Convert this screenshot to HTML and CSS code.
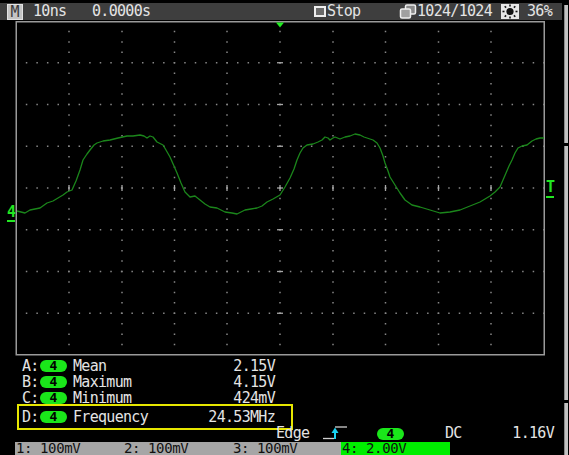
FILE: index.html
```html
<!DOCTYPE html>
<html>
<head>
<meta charset="utf-8">
<link rel="stylesheet" href="styles.css">
</head>
<body>
<div class="app">
  <div class="main">
    <div class="topbar">
      <span class="mbox">M</span>
      <span class="tb t1">10ns</span>
      <span class="tb t2">0.0000s</span>
      <span class="stopicon"></span>
      <span class="tb stoptxt">Stop</span>
      <svg class="acqicon" width="18" height="15" viewBox="0 0 18 15"><rect x="6.5" y="1" width="10" height="9" rx="1.5" fill="#8a8a8a" stroke="#eeeeee" stroke-width="1.5"/><rect x="1.5" y="5" width="10" height="9" rx="1.5" fill="#a0a0a0" stroke="#eeeeee" stroke-width="1.5"/></svg>
      <span class="tb acqtxt">1024/1024</span>
      <svg class="sunicon" width="18" height="15" viewBox="0 0 18 15"><rect width="18" height="15" fill="#e6e6e6"/><circle cx="9" cy="7.5" r="3.6" fill="#111"/><g stroke="#111" stroke-width="1.6"><line x1="9" y1="0.5" x2="9" y2="2.5"/><line x1="9" y1="12.5" x2="9" y2="14.5"/><line x1="1.5" y1="7.5" x2="3.5" y2="7.5"/><line x1="14.5" y1="7.5" x2="16.5" y2="7.5"/><line x1="3.7" y1="2.2" x2="5.1" y2="3.6"/><line x1="12.9" y1="11.4" x2="14.3" y2="12.8"/><line x1="14.3" y1="2.2" x2="12.9" y2="3.6"/><line x1="5.1" y1="11.4" x2="3.7" y2="12.8"/></g></svg>
      <span class="tb pcttxt">36%</span>
    </div>

    <svg class="scope" width="562" height="338" viewBox="0 20 562 338">
      <g class="grid" stroke="#868686" stroke-width="1.5" stroke-dasharray="1.5 8.9375" stroke-dashoffset="0.75">
        <line x1="69" y1="21" x2="69" y2="355"/>
        <line x1="122" y1="21" x2="122" y2="355"/>
        <line x1="174.5" y1="21" x2="174.5" y2="355"/>
        <line x1="227" y1="21" x2="227" y2="355"/>
        <line x1="280" y1="21" x2="280" y2="355"/>
        <line x1="333" y1="21" x2="333" y2="355"/>
        <line x1="385.5" y1="21" x2="385.5" y2="355"/>
        <line x1="438.5" y1="21" x2="438.5" y2="355"/>
        <line x1="491" y1="21" x2="491" y2="355"/>
      </g>
      <g class="grid" stroke="#868686" stroke-width="1.5" stroke-dasharray="1.5 9.06" stroke-dashoffset="0.75">
        <line x1="16" y1="62.75" x2="544" y2="62.75"/>
        <line x1="16" y1="104.5" x2="544" y2="104.5"/>
        <line x1="16" y1="146.25" x2="544" y2="146.25"/>
        <line x1="16" y1="188" x2="544" y2="188"/>
        <line x1="16" y1="229.75" x2="544" y2="229.75"/>
        <line x1="16" y1="271.5" x2="544" y2="271.5"/>
        <line x1="16" y1="313.25" x2="544" y2="313.25"/>
      </g>
      <g stroke="#a8a8a8" stroke-width="1.3">
        <line x1="69" y1="185" x2="69" y2="191"/>
        <line x1="122" y1="185" x2="122" y2="191"/>
        <line x1="174.5" y1="185" x2="174.5" y2="191"/>
        <line x1="227" y1="185" x2="227" y2="191"/>
        <line x1="280" y1="185" x2="280" y2="191"/>
        <line x1="333" y1="185" x2="333" y2="191"/>
        <line x1="385.5" y1="185" x2="385.5" y2="191"/>
        <line x1="438.5" y1="185" x2="438.5" y2="191"/>
        <line x1="491" y1="185" x2="491" y2="191"/>
        <line x1="277" y1="62.75" x2="283" y2="62.75"/>
        <line x1="277" y1="104.5" x2="283" y2="104.5"/>
        <line x1="277" y1="146.25" x2="283" y2="146.25"/>
        <line x1="277" y1="188" x2="283" y2="188"/>
        <line x1="277" y1="229.75" x2="283" y2="229.75"/>
        <line x1="277" y1="271.5" x2="283" y2="271.5"/>
        <line x1="277" y1="313.25" x2="283" y2="313.25"/>
      </g>
      <rect x="16.25" y="21.75" width="528" height="333" fill="none" stroke="#9a9a9a" stroke-width="1.5"/>
      <polygon points="276,22.5 284,22.5 280,27.5" fill="#22ee22"/>
      <path class="wave" fill="none" stroke="#1b861b" stroke-width="1.3" stroke-linejoin="round"
        d="M17,211 L21,212 L25,213 L30,210 L35,209 L40,208 L47,203 L53,201 L58,198 L63,195 L67,192 L72,190 L76,181 L80,170 L83,160 L87,154 L90,150 L94,145 L97,143 L103,141 L110,140 L118,138 L127,136 L133,136 L140,135 L144,136 L147,138 L150,136 L153,137 L157,142 L163,145 L166,150 L170,157 L174,166 L177,173 L181,183 L185,192 L190,197 L195,196 L200,200 L205,204 L210,207 L217,208 L225,212 L232,213 L237,214 L241,212 L245,210 L251,209 L257,208 L262,206 L267,202 L273,199 L280,195 L285,187 L290,178 L294,169 L297,160 L300,153 L303,148 L307,145 L313,144 L318,142 L322,140 L325,137 L328,138 L330,140 L333,138 L335,137 L340,139 L345,137 L350,136 L355,134 L360,135 L364,137 L367,138 L373,140 L377,143 L380,148 L383,156 L385,163 L388,171 L390,177 L395,185 L400,193 L405,200 L412,205 L420,207 L430,210 L440,213 L450,212 L460,210 L470,206 L480,202 L485,199 L490,196 L495,192 L500,187 L503,180 L506,173 L509,166 L512,160 L515,153 L518,148 L522,146 L527,145 L532,141 L536,139 L540,138 L544,138"/>
      <text x="7" y="217" class="mark">4</text>
      <rect x="7" y="220" width="8" height="2" fill="#22e622"/>
      <text x="546" y="192" class="mark">T</text>
      <rect x="546" y="196" width="8" height="2" fill="#22e622"/>
    </svg>

    <div class="meas">
      <div class="row"><span class="lbl">A:</span><span class="pill">4</span><span class="name">Mean</span><span class="val">2.15V</span></div>
      <div class="row"><span class="lbl">B:</span><span class="pill">4</span><span class="name">Maximum</span><span class="val">4.15V</span></div>
      <div class="row rowc"><span class="lbl">C:</span><span class="pill">4</span><span class="name">Minimum</span><span class="val">424mV</span></div>
      <div class="row sel"><span class="lbl">D:</span><span class="pill">4</span><span class="name">Frequency</span><span class="val">24.53MHz</span></div>
    </div>

    <div class="trig">
      <span class="edge">Edge</span>
      <svg class="edgeicon" width="26" height="14" viewBox="0 0 26 14"><path d="M1 12.5 H12" stroke="#cfcfcf" stroke-width="1.3" fill="none"/><path d="M13 1 H25" stroke="#cfcfcf" stroke-width="1.3" fill="none"/><path d="M13 13 V5" stroke="#19d2f0" stroke-width="2" fill="none"/><polygon points="9.5,7 16.5,7 13,1.5" fill="#19d2f0"/></svg>
      <span class="pill tpill">4</span>
      <span class="dc">DC</span>
      <span class="lvl">1.16V</span>
    </div>

    <div class="chans">
      <span class="ch grey">1: 100mV</span>
      <span class="ch grey">2: 100mV</span>
      <span class="ch grey">3: 100mV</span>
      <span class="ch green">4: 2.00V</span>
    </div>
  </div>
  <div class="scroll">
    <div class="seg s1"></div>
    <div class="seg s2"></div>
    <div class="seg s3"></div>
  </div>
</div>
</body>
</html>
```

FILE: styles.css
```css
html, body {
  margin: 0;
  padding: 0;
  background: #000;
}

.app {
  display: flex;
  width: 569px;
  height: 455px;
  overflow: hidden;
  background: #000;
  font-family: "DejaVu Sans Mono", "Liberation Mono", monospace;
  font-size: 15px;
  line-height: 15px;
  letter-spacing: -0.7px;
  color: #e4e4e4;
}

.main {
  width: 562px;
  display: flex;
  flex-direction: column;
}

/* top status bar */
.topbar {
  margin-top: 3px;
  height: 17px;
  background: #3e3e3e;
  display: flex;
  align-items: center;
  white-space: nowrap;
}

.mbox {
  margin-left: 7px;
  width: 16px;
  height: 16px;
  box-sizing: border-box;
  background: #c4c4c4;
  border: 1px solid #e2e2e2;
  color: #3a3a3a;
  font-size: 15px;
  line-height: 14px;
  text-align: center;
  letter-spacing: 0;
}

.tb {
  line-height: 17px;
}

.t1 {
  margin-left: 10px;
  width: 59px;
}

.t2 {
  width: 222px;
}

.stopicon {
  width: 12px;
  height: 11px;
  box-sizing: border-box;
  border: 2px solid #eeeeee;
  background: #6a6a6a;
  margin-right: 1px;
}

.stoptxt {
  width: 72px;
}

.acqicon {
  flex: none;
}

.acqtxt {
  width: 84px;
}

.sunicon {
  flex: none;
  margin-right: 8px;
}

/* oscilloscope screen */
.scope {
  display: block;
  flex: none;
}

.mark {
  font-family: "DejaVu Sans Mono", monospace;
  font-size: 15px;
  font-weight: bold;
  fill: #22e622;
}

/* measurement list */
.meas {
  display: flex;
  flex-direction: column;
}

.row {
  display: flex;
  align-items: center;
  height: 16px;
  line-height: 14px;
  width: 275px;
  box-sizing: border-box;
  padding-left: 22px;
  white-space: nowrap;
}

.lbl {
  width: 18px;
}

.pill {
  width: 27px;
  height: 12px;
  border-radius: 6px;
  background: #1ae61a;
  color: #000;
  font-size: 13px;
  font-weight: bold;
  line-height: 12px;
  text-align: center;
  letter-spacing: 0;
  margin-right: 6px;
  flex: none;
}

.val {
  margin-left: auto;
}

.sel {
  position: relative;
  margin-top: -2px;
  margin-left: 17px;
  width: 276px;
  height: 26px;
  padding-left: 3px;
  padding-right: 16px;
  border: 2px solid #e6e600;
}

/* trigger line */
.trig {
  position: relative;
  margin-top: -4px;
  height: 15px;
  line-height: 13px;
  display: flex;
  align-items: center;
  padding-left: 276px;
  padding-right: 8px;
  white-space: nowrap;
}

.edge {
  width: 33px;
}

.edgeicon {
  flex: none;
  margin-left: 13px;
  margin-top: -2px;
}

.tpill {
  margin-left: 29px;
  margin-right: 0;
}

.dc {
  margin-left: 41px;
}

.lvl {
  margin-left: auto;
}

/* channel bar */
.chans {
  margin-top: 1px;
  margin-left: 15px;
  height: 13px;
  display: grid;
  grid-template-columns: 108px 109px 109px 109px;
  white-space: nowrap;
  font-size: 14px;
  letter-spacing: -0.4px;
}

.ch {
  line-height: 13px;
  padding-left: 1px;
  color: #111;
}

.grey {
  background: #a6a6a6;
}

.green {
  background: #00ee00;
}

/* right scroll rail */
.scroll {
  width: 4px;
  margin-left: 2px;
  padding-top: 5px;
  display: flex;
  flex-direction: column;
  gap: 3px;
}

.seg {
  background: #c2c2c2;
  border-left: 1px solid #8a8a8a;
}

.s1 {
  height: 138px;
}

.s2 {
  height: 254px;
}

.s3 {
  flex: 1;
}
```
